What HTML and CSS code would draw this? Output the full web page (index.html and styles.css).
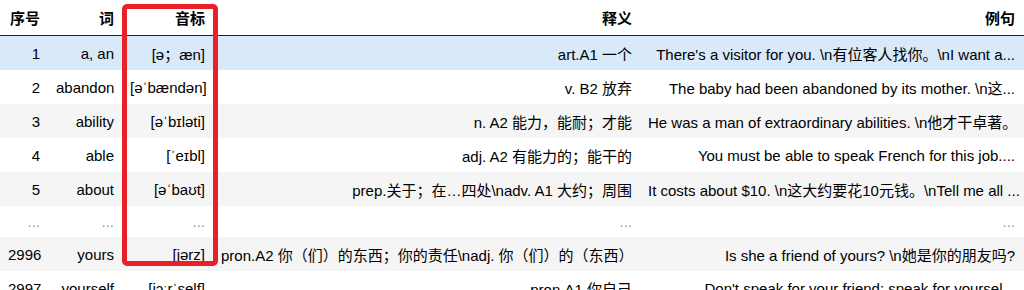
FILE: index.html
```html
<!DOCTYPE html>
<html lang="zh">
<head>
<meta charset="utf-8">
<link rel="stylesheet" href="styles.css">
</head>
<body>
<div class="frame">
  <table class="df">
    <colgroup>
      <col class="c-id"><col class="c-word"><col class="c-ipa"><col class="c-def"><col class="c-ex">
    </colgroup>
    <thead>
      <tr><th>序号</th><th>词</th><th>音标</th><th>释义</th><th class="last">例句</th></tr>
    </thead>
    <tbody>
      <tr class="odd hover"><td>1</td><td>a, an</td><td>[ə；æn]</td><td>art.A1 一个</td><td class="last">There's a visitor for you. \n有位客人找你。\nI want a...</td></tr>
      <tr><td>2</td><td>abandon</td><td>[əˈbændən]</td><td>v. B2 放弃</td><td class="last">The baby had been abandoned by its mother. \n这...</td></tr>
      <tr class="odd"><td>3</td><td>ability</td><td>[əˈbɪləti]</td><td>n. A2 能力，能耐；才能</td><td class="last">He was a man of extraordinary abilities. \n他才干卓著。</td></tr>
      <tr><td>4</td><td>able</td><td>[ˈeɪbl]</td><td>adj. A2 有能力的；能干的</td><td class="last">You must be able to speak French for this job....</td></tr>
      <tr class="odd"><td>5</td><td>about</td><td>[əˈbaʊt]</td><td>prep.关于；在…四处\nadv. A1 大约；周围</td><td class="last">It costs about $10. \n这大约要花10元钱。\nTell me all ...</td></tr>
      <tr class="gap"><td>...</td><td>...</td><td>...</td><td>...</td><td class="last">...</td></tr>
      <tr class="odd"><td>2996</td><td>yours</td><td>[jərz]</td><td>pron.A2 你（们）的东西；你的责任\nadj. 你（们）的（东西）</td><td class="last">Is she a friend of yours? \n她是你的朋友吗?</td></tr>
      <tr><td>2997</td><td>yourself</td><td>[jɔːrˈself]</td><td>pron.A1 你自己</td><td class="last">Don't speak for your friend; speak for yoursel...</td></tr>
    </tbody>
  </table>
  <div class="highlight-box"></div>
</div>
</body>
</html>
```

FILE: styles.css
```css
html, body {
  margin: 0;
  padding: 0;
  background: #fff;
}

body {
  font-family: "Liberation Sans", Arial, "Noto Sans CJK SC", sans-serif;
  font-size: 15px;
  color: #000;
  overflow: hidden;
}

.frame {
  position: relative;
  width: 1024px;
  height: 290px;
  overflow: hidden;
}

.df {
  width: 1024px;
  table-layout: fixed;
  border-collapse: separate;
  border-spacing: 0;
}

.c-id { width: 48px; }
.c-word { width: 74px; }
.c-ipa { width: 91px; }
.c-def { width: 427px; }
.c-ex { width: 384px; }

.df th,
.df td {
  padding: 0 8px;
  text-align: right;
  white-space: nowrap;
  overflow: hidden;
  vertical-align: middle;
}

.df th {
  height: 35px;
  font-weight: bold;
  border-bottom: 1px solid #222;
}

.df td {
  height: 34px;
}

.df .last {
  padding-right: 9px;
}

.df tr.odd td {
  background: #f5f5f5;
}

.df tr.hover td {
  background: #d8e9f9;
}

.df tr.gap td {
  height: 31px;
  color: #999;
}

.highlight-box {
  position: absolute;
  left: 122px;
  top: 4px;
  width: 96px;
  height: 262px;
  box-sizing: border-box;
  border: 5px solid #e8202a;
  border-radius: 5px;
}
```
